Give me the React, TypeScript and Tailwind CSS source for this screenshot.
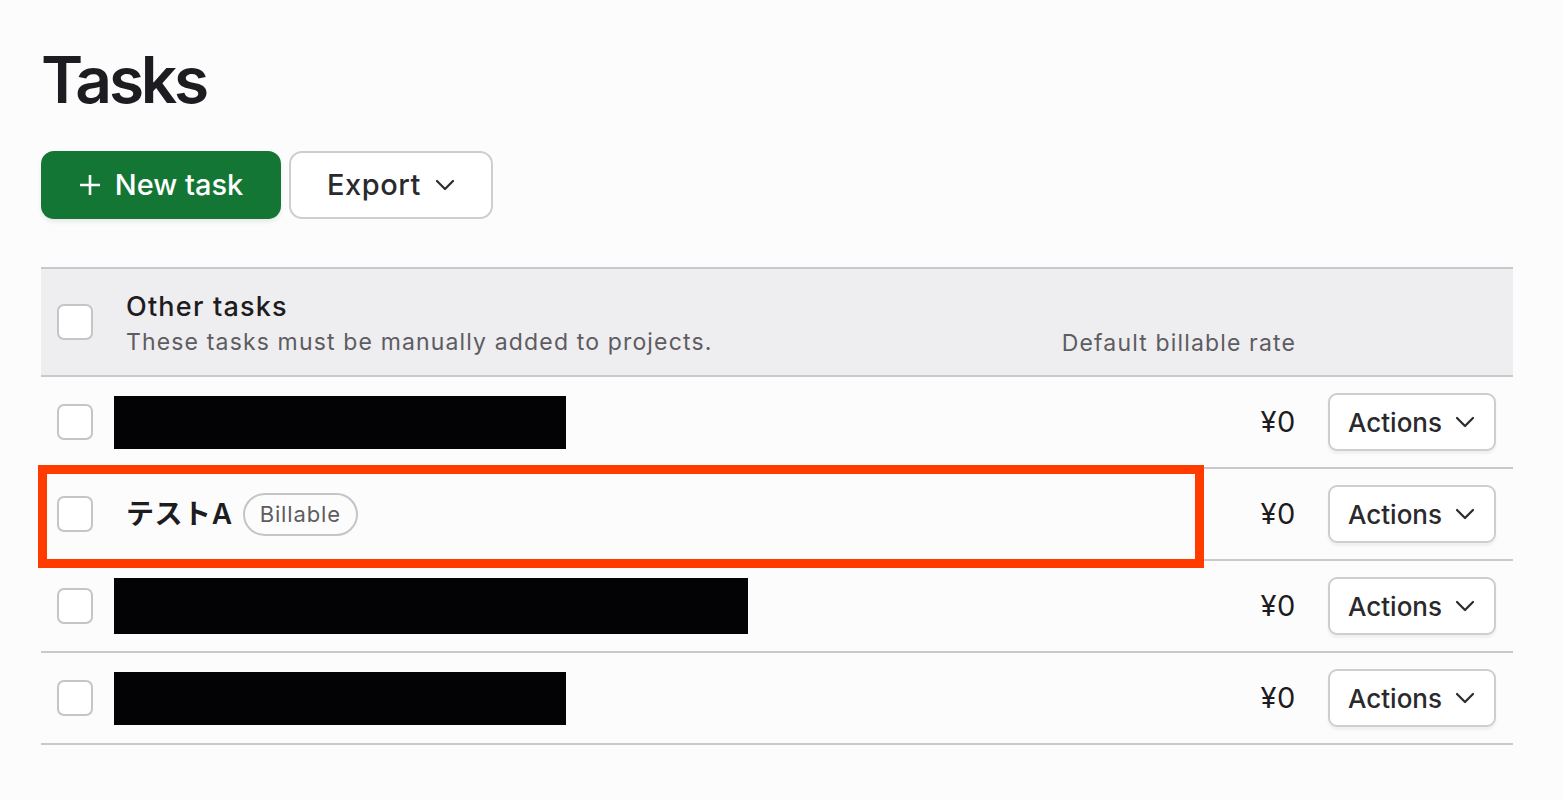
import React from "react";

const font = "font-['Inter','Noto_Sans_CJK_JP',sans-serif]";

function Chevron({ className = "" }: { className?: string }) {
  return (
    <svg width="20" height="12" viewBox="0 0 20 12" fill="none" className={className}>
      <polyline points="2,2 10,10 18,2" stroke="currentColor" strokeWidth="2.2" strokeLinecap="round" strokeLinejoin="round" />
    </svg>
  );
}

function Checkbox() {
  return <div className="w-9 h-9 shrink-0 rounded-[7px] border-2 border-[#c5c4c8] bg-white" />;
}

function ActionsButton() {
  return (
    <button className="flex items-center gap-[13px] h-[58px] w-[168px] pl-[18px] rounded-[9px] border-2 border-[#cfcdd2] bg-white text-[26px] font-medium text-[#2a292d] shadow-[0_3px_3px_rgba(0,0,0,0.05)]">
      Actions
      <Chevron className="text-[#2a292d]" />
    </button>
  );
}

type Row = { redact?: number; name?: string; billable?: boolean };

const rows: Row[] = [{ redact: 452 }, { name: "テストA", billable: true }, { redact: 634 }, { redact: 452 }];

export default function App() {
  return (
    <div className={`${font} min-h-screen bg-[#fdfcfd] text-[#1d1c20] pl-[41px] pr-[49px] pt-[48px]`}>
      <h1 className="text-[64px] leading-none font-semibold tracking-[-0.05em] text-[#1d1c20]">Tasks</h1>

      <div className="flex gap-2 mt-[39px]">
        <button className="flex items-center justify-center gap-[14px] w-[240px] h-[68px] rounded-[13px] bg-[#137634] text-white text-[29px] font-medium shadow-[0_3px_4px_rgba(0,0,0,0.08)]">
          <svg width="22" height="22" viewBox="0 0 22 22">
            <path d="M11 1v20M1 11h20" stroke="currentColor" strokeWidth="2.6" />
          </svg>
          New task
        </button>
        <button className="flex items-center justify-center gap-[14px] w-[204px] h-[68px] rounded-[13px] border-2 border-[#cfcdd2] bg-white text-[29px] font-medium tracking-[0.02em] text-[#2a292d]">
          Export
          <Chevron />
        </button>
      </div>

      <div className="relative mt-[48px] border-t-2 border-[#cac8cd]">
        <div className="flex items-center h-[108px] bg-[#eeedf0] border-b-2 border-[#cac8cd] pl-4">
          <Checkbox />
          <div className="flex-1 pl-[33px] mt-[3px]">
            <div className="text-[27px] leading-[31px] font-medium tracking-[0.045em] text-[#1d1c20]">Other tasks</div>
            <div className="mt-[6px] text-[23px] leading-[28px] text-[#5d5c61] tracking-[0.05em]">These tasks must be manually added to projects.</div>
          </div>
          <div className="self-end pb-[18px] text-[23px] leading-[28px] text-[#5d5c61] tracking-[0.05em]">Default billable rate</div>
          <div className="w-[217px]" />
        </div>

        {rows.map((r, i) => (
          <div key={i} className="flex items-center h-[92px] border-b-2 border-[#cac8cd] pl-4 pr-[17px]">
            <Checkbox />
            <div className="flex-1 flex items-center pl-[21px]">
              {r.redact ? (
                <div className="bg-[#030204]" style={{ width: r.redact, height: r.redact > 500 ? 56 : 53 }} />
              ) : (
                <div className="flex items-center gap-[10px] pl-3">
                  <span className="text-[28px] font-semibold tracking-[0.02em] text-[#1d1c20]">{r.name}</span>
                  {r.billable && (
                    <span className="h-[43px] px-[15px] flex items-center rounded-full border-2 border-[#c5c4c8] text-[22px] tracking-[0.04em] text-[#5d5c61]">
                      Billable
                    </span>
                  )}
                </div>
              )}
            </div>
            <div className="text-[29px] tracking-[0.02em] text-[#1d1c20] mr-[32px]">¥0</div>
            <ActionsButton />
          </div>
        ))}

        <div className="absolute left-[-3px] top-[196px] w-[1166px] h-[103px] border-[9px] border-[#ff3b00] pointer-events-none" />
      </div>
    </div>
  );
}
